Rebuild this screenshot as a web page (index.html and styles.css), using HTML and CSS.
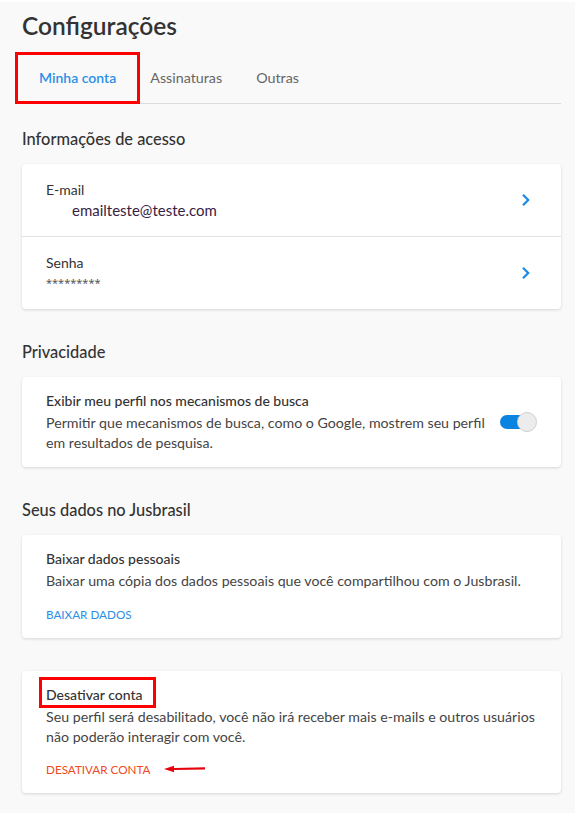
FILE: index.html
```html
<!DOCTYPE html>
<html lang="pt-BR">
<head>
    <meta charset="UTF-8">
    <meta name="viewport" content="width=device-width, initial-scale=1.0">
    <title>Configurações</title>
    <link rel="stylesheet" href="styles.css">
</head>
<body>
    <div class="page">
        <h1 class="page-title">Configurações</h1>

        <nav class="tabs">
            <a href="#" class="tab active marked">Minha conta</a>
            <a href="#" class="tab">Assinaturas</a>
            <a href="#" class="tab">Outras</a>
        </nav>

        <!-- Informações de acesso -->
        <h2 class="section-title">Informações de acesso</h2>
        <div class="card">
            <a href="#" class="row">
                <div class="row-text">
                    <div class="row-label">E-mail</div>
                    <div class="row-value email">emailteste@teste.com</div>
                </div>
                <svg class="chevron" width="10" height="14" viewBox="0 0 10 14"><path d="M3 1.8 L8.2 7 L3 12.2" fill="none" stroke="#1a8ae6" stroke-width="2.2"/></svg>
            </a>
            <a href="#" class="row">
                <div class="row-text">
                    <div class="row-label">Senha</div>
                    <div class="row-value stars">*********</div>
                </div>
                <svg class="chevron" width="10" height="14" viewBox="0 0 10 14"><path d="M3 1.8 L8.2 7 L3 12.2" fill="none" stroke="#1a8ae6" stroke-width="2.2"/></svg>
            </a>
        </div>

        <!-- Privacidade -->
        <h2 class="section-title">Privacidade</h2>
        <div class="card block">
            <div class="block-flex">
                <div class="block-text">
                    <h3 class="block-title">Exibir meu perfil nos mecanismos de busca</h3>
                    <p class="block-desc">Permitir que mecanismos de busca, como o Google, mostrem seu perfil em resultados de pesquisa.</p>
                </div>
                <span class="toggle on"><span class="knob"></span></span>
            </div>
        </div>

        <!-- Seus dados -->
        <h2 class="section-title">Seus dados no Jusbrasil</h2>
        <div class="card block">
            <h3 class="block-title">Baixar dados pessoais</h3>
            <p class="block-desc">Baixar uma cópia dos dados pessoais que você compartilhou com o Jusbrasil.</p>
            <a href="#" class="action">Baixar dados</a>
        </div>

        <div class="card block danger-card">
            <h3 class="block-title marked-title">Desativar conta</h3>
            <p class="block-desc">Seu perfil será desabilitado, você não irá receber mais e-mails e outros usuários não poderão interagir com você.</p>
            <div class="action-line">
                <a href="#" class="action danger">Desativar conta</a>
                <svg class="arrow" width="44" height="10" viewBox="0 0 44 10"><path d="M11 5 L42 4.3" stroke="#e8000b" stroke-width="2.2" fill="none"/><path d="M1 5 L11 1.8 L11 8.2 Z" fill="#e8000b"/></svg>
            </div>
        </div>
    </div>
</body>
</html>
```

FILE: styles.css
```css
/* Base */
body {
    margin: 0;
    background: #fff;
    font-family: Lato, "Noto Sans", sans-serif;
    color: #333;
}

.page {
    width: 575px;
    height: 811px;
    margin-top: 2px;
    padding: 8px 14px 0 22px;
    box-sizing: border-box;
    background: #f9f9f9;
}

.page-title {
    margin: 0;
    font-size: 24.5px;
    line-height: 32px;
    font-weight: 600;
    color: #333;
}

/* Tabs */
.tabs {
    display: flex;
    margin-top: 11px;
    border-bottom: 1px solid #dcdcdc;
}

.tab {
    position: relative;
    height: 50px;
    line-height: 50px;
    padding: 0 17px;
    font-size: 14.3px;
    color: #666;
    text-decoration: none;
}

.tab.active {
    font-size: 14px;
    color: #2b8fe6;
    font-weight: 600;
}

.tab.marked::after {
    content: "";
    position: absolute;
    left: -7px;
    right: -7px;
    top: -1px;
    bottom: -1px;
    border: 3px solid #f00;
}

/* Sections */
.section-title {
    margin: 23px 0 13px;
    font-size: 16.4px;
    line-height: 24px;
    font-weight: 500;
    color: #333;
}

.card {
    width: 539px;
    background: #fff;
    border-radius: 4px;
    box-shadow: 0 1px 3px rgba(0, 0, 0, 0.14);
}

.card + .section-title {
    margin-top: 31px;
}

.row {
    display: flex;
    align-items: center;
    justify-content: space-between;
    height: 72px;
    padding: 0 31px 0 24px;
    text-decoration: none;
    color: inherit;
}

.row + .row {
    border-top: 1px solid #e2e2e2;
}

.row-label {
    font-size: 14px;
    line-height: 20px;
    color: #333;
}

.row-value {
    font-size: 14px;
    line-height: 20px;
    color: #444;
}

.row-value.email {
    padding-left: 26px;
    font-size: 15px;
    color: #3a2245;
}

.row-value.stars {
    font-family: "Noto Sans", sans-serif;
    font-size: 11px;
    color: #555;
}

/* Blocos */
.block {
    padding: 14px 24px 14px;
    box-sizing: border-box;
}

.block-flex {
    display: flex;
    align-items: center;
    justify-content: space-between;
}

.block-text {
    width: 450px;
}

.block-title {
    margin: 0;
    font-size: 14px;
    line-height: 20px;
    font-weight: 500;
    color: #333;
}

.block-desc {
    margin: 2px 0 0;
    font-size: 14.2px;
    line-height: 20px;
    color: #444;
}

.toggle {
    position: relative;
    width: 37px;
    height: 20px;
    display: inline-block;
}

.toggle.on::before {
    content: "";
    position: absolute;
    left: 0;
    top: 3px;
    width: 30px;
    height: 14px;
    border-radius: 7px;
    background: #0a84e0;
}

.knob {
    position: absolute;
    right: 0;
    top: 0;
    width: 20px;
    height: 20px;
    border-radius: 50%;
    background: #ececec;
    border: 1px solid #d0d0d0;
    box-sizing: border-box;
}

.action {
    display: inline-block;
    margin-top: 13px;
    font-size: 11.7px;
    line-height: 20px;
    text-transform: uppercase;
    color: #2b8fe6;
    text-decoration: none;
}

.danger-card {
    margin-top: 33px;
    padding-top: 13px;
}

.marked-title {
    display: inline-block;
    position: relative;
}

.marked-title::after {
    content: "";
    position: absolute;
    left: -7px;
    right: -14px;
    top: -8px;
    bottom: -3px;
    border: 3px solid #f00;
}

.action-line {
    display: flex;
    align-items: center;
    gap: 12px;
    margin-top: 12px;
}

.action-line .action {
    margin-top: 0;
}

.action.danger {
    color: #f04a22;
}
```
